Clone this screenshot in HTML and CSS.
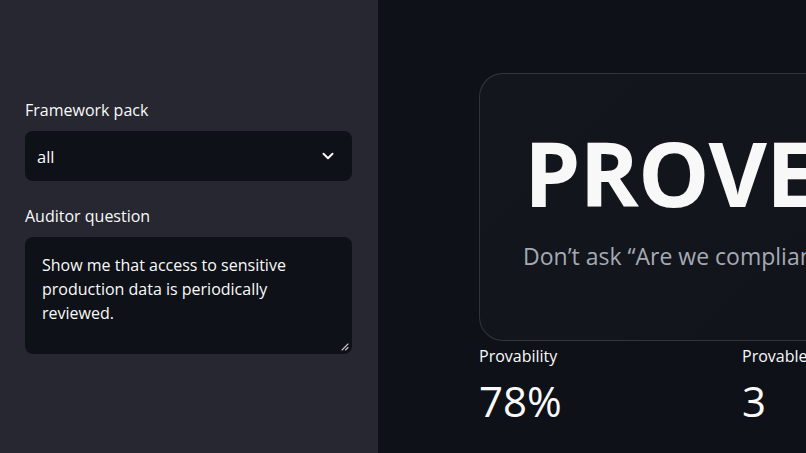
FILE: index.html
```html
<!DOCTYPE html>
<html lang="en">
<head>
<meta charset="utf-8">
<title>Prove</title>
<link rel="stylesheet" href="styles.css">
</head>
<body>
<div class="app">
  <aside class="sidebar">
    <div class="field">
      <label class="label">Framework pack</label>
      <div class="select">
        <span class="select-value">all</span>
        <svg class="chevron" width="14" height="14" viewBox="0 0 14 14"><path d="M2.5 4.8 L7 9.2 L11.5 4.8" fill="none" stroke="#fafafa" stroke-width="2" stroke-linecap="round" stroke-linejoin="round"/></svg>
      </div>
    </div>
    <div class="field">
      <label class="label">Auditor question</label>
      <div class="textarea">
        <p class="textarea-text">Show me that access to sensitive production data is periodically reviewed.</p>
        <svg class="resize" width="8" height="8" viewBox="0 0 8 8"><path d="M7 1 L1 7 M7 4.5 L4.5 7" stroke="#c8c9cc" stroke-width="1.1" stroke-linecap="round"/></svg>
      </div>
    </div>
  </aside>
  <main class="main">
    <section class="hero">
      <h1 class="hero-title">PROVE</h1>
      <p class="hero-sub">Don’t ask “Are we compliant?” Ask what you can prove.</p>
    </section>
    <div class="metrics">
      <div class="metric">
        <div class="metric-label">Provability</div>
        <div class="metric-value">78%</div>
      </div>
      <div class="metric">
        <div class="metric-label">Provable</div>
        <div class="metric-value">3</div>
      </div>
    </div>
  </main>
</div>
</body>
</html>
```
FILE: styles.css
```css
html, body {
  margin: 0;
  padding: 0;
  height: 100%;
  overflow: hidden;
  background: #0e1117;
  font-family: "Open Sans", "Noto Sans", sans-serif;
  color: #fafafa;
}
.app {
  display: flex;
  width: 806px;
  height: 453px;
  overflow: hidden;
}
.sidebar {
  flex: 0 0 378px;
  box-sizing: border-box;
  background: #262730;
  padding: 99px 26px 0 25px;
  display: flex;
  flex-direction: column;
  gap: 24px;
}
.field {
  display: flex;
  flex-direction: column;
  gap: 10px;
}
.label {
  font-size: 16px;
  line-height: 22px;
  color: #fafafa;
}
.select {
  height: 50px;
  background: #0e1117;
  border-radius: 8px;
  display: flex;
  align-items: center;
  justify-content: space-between;
  padding: 0 17px 0 12px;
}
.select-value {
  font-size: 16.5px;
}
.chevron { display: block; }
.textarea {
  position: relative;
  height: 117px;
  box-sizing: border-box;
  background: #0e1117;
  border-radius: 8px;
  padding: 16px 20px 0 17px;
}
.textarea-text {
  margin: 0;
  font-size: 16px;
  line-height: 24px;
  width: 275px;
}
.resize {
  position: absolute;
  right: 3px;
  bottom: 3px;
}
.main {
  flex: 1;
  min-width: 0;
  padding: 73px 0 0 101px;
  overflow: hidden;
}
.hero {
  box-sizing: border-box;
  width: 700px;
  height: 268px;
  border: 1px solid rgba(250, 250, 250, 0.14);
  border-radius: 24px;
  background: linear-gradient(135deg, rgba(255,255,255,0.025), rgba(255,255,255,0.012));
  padding: 50px 0 0 44px;
}
.hero-title {
  margin: 0;
  font-size: 90px;
  line-height: 96px;
  font-weight: 700;
  letter-spacing: -1px;
  white-space: nowrap;
  color: #f8f8f8;
}
.hero-sub {
  margin: 21px 0 0 -1px;
  font-size: 23px;
  line-height: 30px;
  color: #a5aab4;
  white-space: nowrap;
}
.metrics {
  display: flex;
  margin-top: 4px;
}
.metric {
  flex: 0 0 263px;
}
.metric-label {
  font-size: 16px;
  line-height: 22px;
}
.metric-value {
  font-size: 42px;
  line-height: 56px;
  margin-top: 6px;
}
```
